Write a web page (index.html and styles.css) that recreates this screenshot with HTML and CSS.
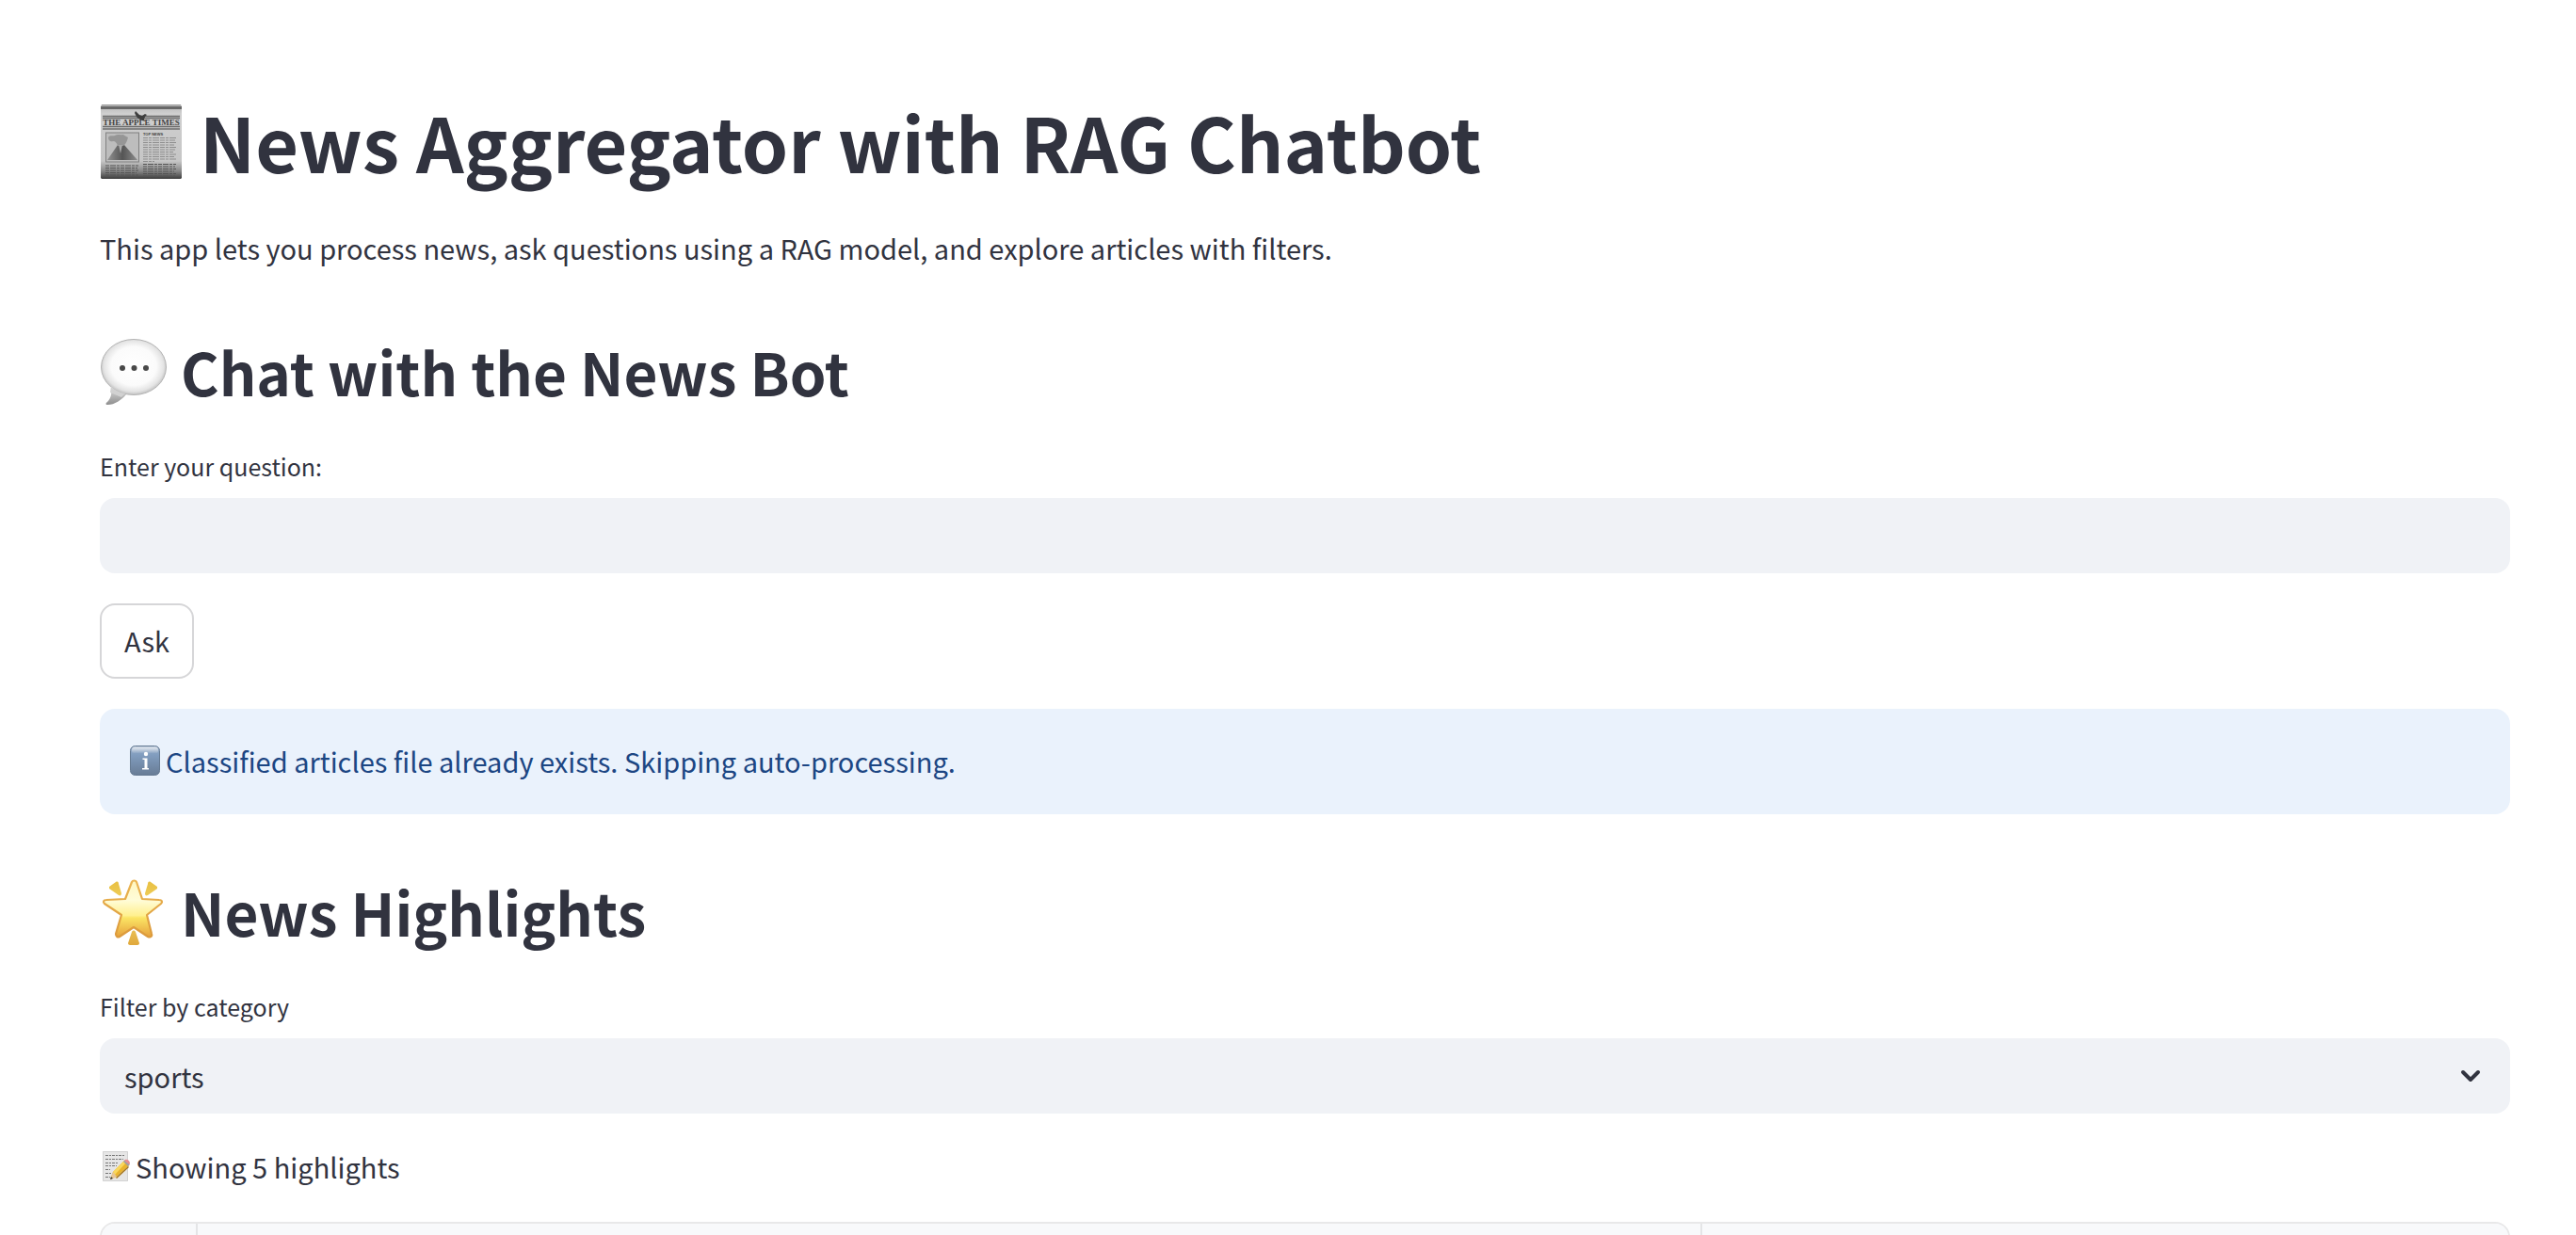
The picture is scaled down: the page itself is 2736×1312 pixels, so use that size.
FILE: index.html
```html
<!DOCTYPE html>
<html lang="en">
<head>
<meta charset="utf-8">
<meta name="viewport" content="width=device-width, initial-scale=1">
<title>News Aggregator with RAG Chatbot</title>
<link rel="stylesheet" href="styles.css">
</head>
<body>
<main class="app">
  <h1 class="title">
    <svg class="icon-title" viewBox="0 0 88 88" aria-hidden="true">
      <defs>
        <linearGradient id="paper" x1="0" y1="0" x2="0" y2="1">
          <stop offset="0" stop-color="#b4b4b4"/><stop offset=".12" stop-color="#cfcfcf"/><stop offset=".76" stop-color="#c6c6c6"/><stop offset=".9" stop-color="#858585"/><stop offset="1" stop-color="#3c3c3c"/>
        </linearGradient>
        <linearGradient id="mountain" x1="0" y1="0" x2="1" y2="0">
          <stop offset="0" stop-color="#929292"/><stop offset=".5" stop-color="#555"/><stop offset="1" stop-color="#8c8c8c"/>
        </linearGradient>
      </defs>
      <path d="M2 5h84l1 2v76l-1 1H2l-1-1V7z" fill="url(#paper)"/>
      <path d="M2 5h84v1H2z" fill="#999"/>
      <path d="M1 7h86v3H1z" fill="#686868"/>
      <path d="M3 17.500h82M3 19.500h82M3 28.500h82M3 31h82" stroke="#6c6c6c" stroke-width="1.500"/>
      <text x="44" y="27" text-anchor="middle" class="masthead">THE APPLE TIMES</text>
      <path d="M38 12l4 4 3 1 3-2 2 1-2 2-1 3 2 2-4-1-4-2-2-2-2-4z" fill="#3e3e3e"/>
      <rect x="6.500" y="35" width="35" height="31" fill="#bdbdbd" stroke="#808080"/>
      <path d="M8 64L19 48h7l14 16z" fill="url(#mountain)"/>
      <path d="M9 40c2-3 5-1 7-2 3-2 6 0 8-1 2 0 3 2 6 3-1 3-2 7-5 9h-6c-1-3-2-5-5-5-3 1-5-1-5-4z" fill="#969696"/>
      <path d="M20 48l2 9 2-9z" fill="#aaa"/>
      <text x="46" y="38" class="topnews">TOP NEWS</text>
      <path d="M46 40.500h35M46 43h34M46 45.500h35M46 48h33M46 50.500h35M46 53h34M46 55.500h32M46 58h35M46 60.500h33M46 63h35M46 65.500h12" stroke="#8e8e8e" stroke-dasharray="5 1 3 1 7 1"/>
      <path d="M6 70h35M6 72.500h34M6 75h35M6 77.500h33M6 80h35M46 68.500h35M46 71h34M46 73.500h35M46 76h33M46 78.500h35M46 81h34" stroke="#555" stroke-dasharray="4 1 6 1 3 1"/>
    </svg>
    <span>News Aggregator with RAG Chatbot</span>
  </h1>
  <p class="text intro">This app lets you process news, ask questions using a RAG model, and explore articles with filters.</p>

  <h2 class="heading">
    <svg class="icon-heading" viewBox="0 0 72 72" aria-hidden="true">
      <defs>
        <radialGradient id="bubble" cx=".5" cy=".48" r=".56">
          <stop offset="0" stop-color="#fff"/><stop offset=".62" stop-color="#fbfbfb"/><stop offset=".82" stop-color="#e4e4e4"/><stop offset="1" stop-color="#a9a9a9"/>
        </radialGradient>
        <linearGradient id="tail" x1="0" y1="0" x2="0" y2="1">
          <stop offset="0" stop-color="#dcdcdc"/><stop offset="1" stop-color="#8e8e8e"/>
        </linearGradient>
      </defs>
      <path d="M12 54c5 5 10 7 16 7-5 6-12 11-20 11-2 0-2-2 0-3 4-4 5-9 4-15z" fill="url(#tail)"/>
      <ellipse cx="36" cy="32" rx="34.500" ry="29.500" fill="url(#bubble)" stroke="#b4b4b4" stroke-width="1"/>
      <path d="M12 52c4 5 9 7 15 8l-4 4-12-5z" fill="#d2d2d2"/>
      <circle cx="24" cy="33" r="3" fill="#494949"/><circle cx="36.500" cy="33" r="3" fill="#494949"/><circle cx="49" cy="33" r="3" fill="#494949"/>
    </svg>
    <span>Chat with the News Bot</span>
  </h2>

  <div class="field">
    <label class="label" for="question">Enter your question:</label>
    <input class="control" id="question" type="text">
  </div>
  <button class="button" type="button">Ask</button>

  <div class="alert" role="status">
    <p class="text with-icon">
      <svg class="icon-text" viewBox="0 0 32 32" aria-hidden="true">
        <defs>
          <linearGradient id="info" x1="0" y1="0" x2="0" y2="1">
            <stop offset="0" stop-color="#9fb3ca"/><stop offset=".3" stop-color="#819dbf"/><stop offset="1" stop-color="#687c95"/>
          </linearGradient>
          <linearGradient id="shine" x1="0" y1="0" x2="0" y2="1">
            <stop offset="0" stop-color="#e3e9f0"/><stop offset="1" stop-color="#e3e9f0" stop-opacity="0"/>
          </linearGradient>
        </defs>
        <rect x=".5" y=".5" width="31" height="31" rx="5" fill="url(#info)" stroke="#657a92"/>
        <rect x="2" y="1.500" width="28" height="7" rx="3" fill="url(#shine)"/>
        <circle cx="17" cy="9" r="2.200" fill="#fff"/>
        <path d="M13.500 13.500h5V24H20v1.500h-7V24h2.500v-9h-2z" fill="#fff"/>
      </svg>
      <span>Classified articles file already exists. Skipping auto-processing.</span>
    </p>
  </div>

  <h2 class="heading">
    <svg class="icon-heading" viewBox="0 0 72 72" aria-hidden="true">
      <defs>
        <linearGradient id="star" x1="0" y1="0" x2="0" y2="1">
          <stop offset="0" stop-color="#fff6c0"/><stop offset=".35" stop-color="#fffcd8"/><stop offset=".62" stop-color="#fff08f"/><stop offset=".66" stop-color="#fbe565"/><stop offset="1" stop-color="#e6a13c"/>
        </linearGradient>
        <linearGradient id="ray" x1="0" y1="0" x2="0" y2="1">
          <stop offset="0" stop-color="#e9c043"/><stop offset=".5" stop-color="#f3d96c"/><stop offset="1" stop-color="#e0a83c"/>
        </linearGradient>
        <linearGradient id="rim" x1="0" y1="0" x2="0" y2="1">
          <stop offset="0" stop-color="#ebb552"/><stop offset="1" stop-color="#dc9a3c"/>
        </linearGradient>
      </defs>
      <path d="M34 5c1-2 4-2 5 0l6 18 18 1c3 0 4 2 2 4L50 40l5 20c1 3-2 4-4 3L36 53 21 63c-2 1-4 0-4-3l6-20L5 28c-2-2-1-4 2-4l20-1z" fill="url(#star)" stroke="url(#rim)" stroke-width="2.200" stroke-linejoin="round"/>
      <path d="M10 10l7-5c2-1 3 0 3 2l3 10c0 2-1 3-3 2L10 12zM61 10l-7-5c-2-1-3 0-3 2l-3 10c0 2 1 3 3 2L61 12zM34 58c1-2 3-2 4 0l4 12c0 1-1 2-2 2h-8c-1 0-2-1-2-2z" fill="url(#ray)"/>
    </svg>
    <span>News Highlights</span>
  </h2>

  <div class="field">
    <label class="label" for="category">Filter by category</label>
    <div class="select">
      <select class="control" id="category"><option>sports</option></select>
      <svg class="chevron" viewBox="0 0 24 16" aria-hidden="true"><path d="M4 4l8 8 8-8" fill="none" stroke="#31333f" stroke-width="4" stroke-linecap="round" stroke-linejoin="round"/></svg>
    </div>
  </div>

  <p class="text with-icon count">
    <svg class="icon-text" viewBox="0 0 32 32" aria-hidden="true">
      <path d="M3 0h27v32H3z" fill="#e6e6e6"/>
      <path d="M3.500.5h26v31h-26z" fill="none" stroke="#d2d2d2"/>
      <path d="M6 4.500h20M6 8.500h19M6 12.500h14M6 15.500h12M6 19.500h5M6 23.500h6M6 27.500h5" stroke="#777" stroke-dasharray="3 1 2 1" fill="none"/>
      <path d="M11 30l3-8L26 10l5 5-13 12z" fill="#e9b32c"/>
      <path d="M14 22L26 10l2 2-12 13z" fill="#f9d75c"/>
      <path d="M17 28l13-12 1 1-13 12z" fill="#a5751d"/>
      <path d="M11 30l3-8 4 5z" fill="#e6c699"/><path d="M11 30l1-3 2 2z" fill="#333"/>
      <path d="M25 11l2-2 5 5-2 2z" fill="#9aa0a5"/><path d="M27 9c2-1 5 1 5 4l-1 1-5-4z" fill="#e88c90"/>
    </svg>
    <span>Showing 5 highlights</span>
  </p>

  <div class="table-frame">
    <table class="table">
      <thead><tr><th class="col-index"></th><th class="col-main"></th><th class="col-side"></th></tr></thead>
    </table>
  </div>
</main>
</body>
</html>
```
FILE: styles.css
```css
* { box-sizing: border-box; }

body {
  margin: 0;
  height: 100vh;
  overflow: hidden;
  background: #fff;
  color: #31333f;
  font-family: "Noto Sans CJK JP", "Noto Sans", sans-serif;
  font-size: 29px;
}

.app {
  display: flex;
  flex-direction: column;
  padding: 97px 70px 0 106px;
}

h1, h2, p { margin: 0; }

svg { display: block; flex: none; }

.title, .heading, .with-icon {
  display: flex;
  align-items: center;
}

.title {
  gap: 18px;
  font-size: 79px;
  line-height: 106px;
  font-weight: 700;
}

.heading {
  gap: 14px;
  margin-top: 60px;
  font-size: 62px;
  line-height: 86px;
  font-weight: 600;
}

.icon-title { width: 88px; height: 88px; }
.icon-heading { width: 72px; height: 72px; }
.icon-text { width: 32px; height: 32px; }

.masthead { font: bold 9px "Liberation Serif", serif; fill: #444; }
.topnews { font: bold 4px "Liberation Sans", sans-serif; fill: #444; }

.text { line-height: 52px; }
.intro { margin: 34px 0 2px; }
.with-icon { gap: 6px; }

.field {
  display: flex;
  flex-direction: column;
  gap: 14px;
  margin-top: 38px;
}

.label {
  font-size: 25px;
  line-height: 40px;
}

.control {
  display: block;
  width: 100%;
  height: 80px;
  margin: 0;
  padding: 0 26px;
  border: 0;
  border-radius: 16px;
  background: #f0f2f6;
  color: inherit;
  font: inherit;
  appearance: none;
}

.select { position: relative; }

.chevron {
  position: absolute;
  right: 30px;
  top: 32px;
  width: 24px;
  height: 16px;
  pointer-events: none;
}

.button {
  align-self: flex-start;
  height: 80px;
  margin-top: 32px;
  padding: 0 24px 2px;
  border: 2px solid #d6d6d8;
  border-radius: 16px;
  background: #fff;
  color: inherit;
  font: inherit;
}

.alert {
  margin-top: 32px;
  padding: 29px 32px 31px;
  border-radius: 16px;
  background: #eaf2fc;
  color: #1c4683;
}

.count { margin-top: 30px; }

.table-frame {
  margin-top: 33px;
  border: 2px solid #e8e8e9;
  border-radius: 16px;
  overflow: hidden;
}

.table {
  width: 100%;
  table-layout: fixed;
  border-collapse: separate;
  border-spacing: 0;
  background: #f8f9fb;
}

.table th {
  height: 70px;
  padding: 0;
  border-right: 2px solid #e4e5e7;
}

.table th:last-child { border-right: 0; }

.col-index { width: 102px; }
.col-side { width: 856px; }
```
